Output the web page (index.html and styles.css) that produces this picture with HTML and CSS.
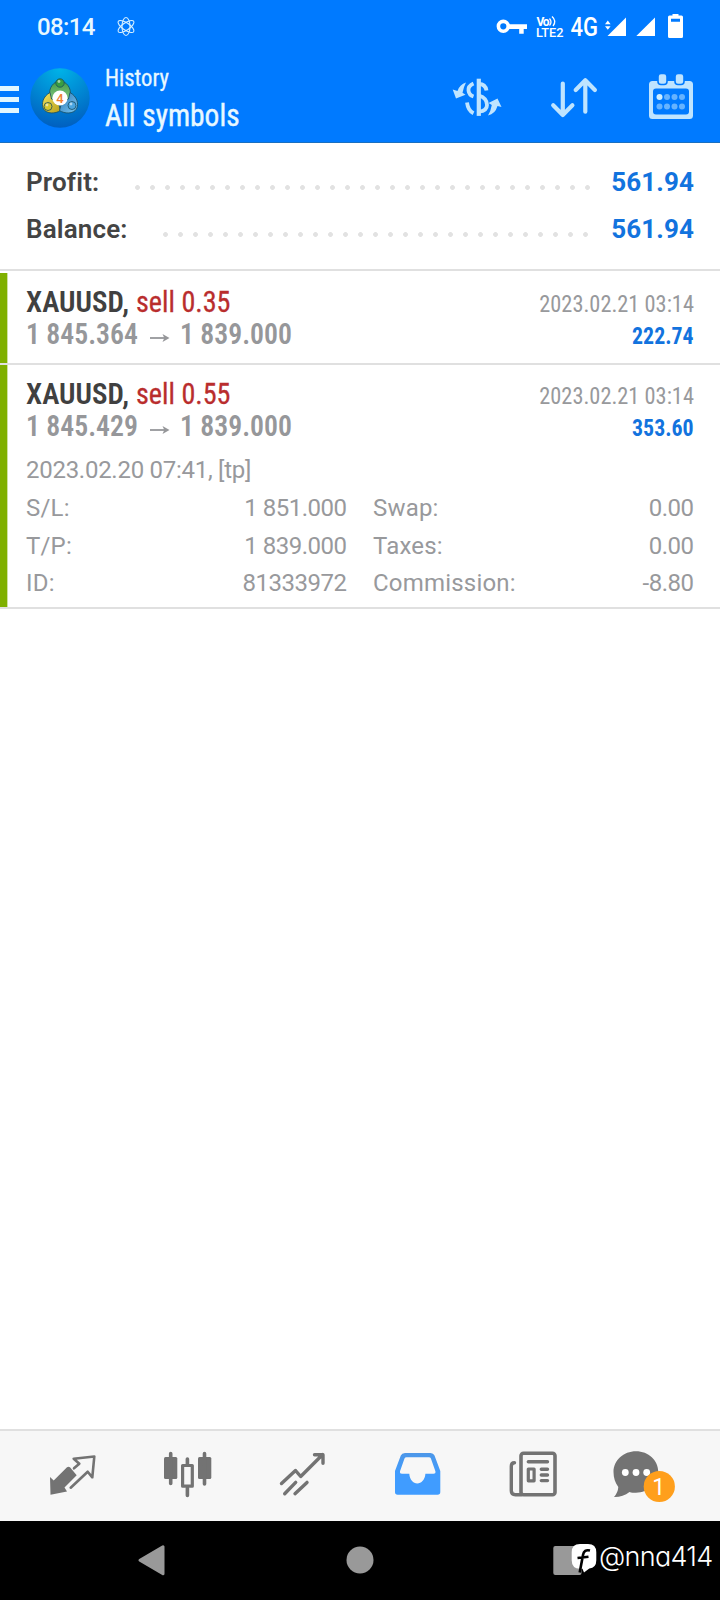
FILE: index.html
```html
<!DOCTYPE html>
<html lang="en">
<head>
<meta charset="utf-8">
<meta name="viewport" content="width=720">
<title>History</title>
<link rel="stylesheet" href="styles.css">
</head>
<body>
<div class="screen">
  <header class="header">
    <div class="status">
      <span class="clock">08:14</span>
      <svg class="atom" viewBox="117 16 18 21" fill="none" stroke="#d8f1ff" stroke-width="1.1">
        <ellipse cx="126" cy="26.500" rx="4" ry="9"/>
        <ellipse cx="126" cy="26.500" rx="3.600" ry="9.300" transform="rotate(56 126 26.500)"/>
        <ellipse cx="126" cy="26.500" rx="3.600" ry="9.300" transform="rotate(-56 126 26.500)"/>
      </svg>
      <svg class="status-icons" viewBox="495 10 190 32" fill="#fff">
        <circle cx="503.300" cy="26.300" r="4.900" fill="none" stroke="#fff" stroke-width="3.600"/>
        <path d="M508 24.300h19v4.600h-3.300v4.800h-4.500v-4.800H508z"/>
        <text class="volte" x="536.500" y="26" textLength="13">Vo</text>
        <path d="M549.500 18.500q3 3.500 0 7M552 16.500q5 4.500 1 9.500" fill="none" stroke="#fff" stroke-width="1.300"/>
        <text class="volte lte" x="536" y="37.300" textLength="27.500" lengthAdjust="spacingAndGlyphs">LTE2</text>
        <text class="net" x="570.500" y="36" textLength="27.500" lengthAdjust="spacingAndGlyphs">4G</text>
        <path d="M605 24.300l2.800-3.800 2.800 3.800zM605 26.200h5.600l-2.800 3.600zM626 17.500V36h-18.500zM655 17.500V36h-18.700z"/>
        <path fill-rule="evenodd" d="M669.500 15.500h3V14h6v1.500h3q1.500 0 1.500 1.500v19.500q0 1.500-1.500 1.500h-12q-1.500 0-1.500-1.500V17q0-1.500 1.500-1.500zM671 18.800v3h9v-3z"/>
      </svg>
    </div>
    <div class="appbar">
      <div class="menu"><i></i><i></i><i></i></div>
      <svg class="logo" viewBox="0 0 60 60">
        <defs>
          <radialGradient id="sky" cx=".5" cy="0" r="1"><stop offset="0" stop-color="#00b4e8"/><stop offset="1" stop-color="#005fc0"/></radialGradient>
          <linearGradient id="grn" x2="0" y2="1"><stop stop-color="#3f9a44"/><stop offset="1" stop-color="#8fce8c"/></linearGradient>
          <linearGradient id="yel" x2="1" y2="1"><stop stop-color="#f3e45e"/><stop offset="1" stop-color="#b79f1c"/></linearGradient>
          <linearGradient id="blu" x2="1" y2="1"><stop stop-color="#2c78b8"/><stop offset="1" stop-color="#7cc8f2"/></linearGradient>
        </defs>
        <circle cx="30" cy="30" r="29.700" fill="url(#sky)"/>
        <g stroke="#194c5f" stroke-width=".8">
          <path d="M20 28c-2-8 4-15 10-15s12 7 10 15c-1 5-7 6-10 6s-9-1-10-6z" fill="url(#grn)"/>
          <path d="M20 24.500c-7 4-9 11-6.500 16.500 3 5 12 5 17 1.500l-2-7.500-7-4z" fill="url(#yel)"/>
          <path d="M40 24.500c7 4 9 11 6.500 16.500-3 5-12 5-17 1.500l2-7.500 7-4z" fill="url(#blu)"/>
          <circle cx="30" cy="15" r="4.200" fill="#399e42"/>
          <circle cx="18" cy="38.500" r="4" fill="#d8c72c"/>
          <circle cx="42" cy="37.500" r="4" fill="#4aa5e0"/>
        </g>
        <g fill="#fff" opacity=".55"><circle cx="29" cy="13.500" r="1.400"/><circle cx="17" cy="37" r="1.400"/><circle cx="41" cy="36" r="1.400"/></g>
        <circle cx="30" cy="30" r="7.600" fill="#fff"/>
        <text x="30" y="34.500" text-anchor="middle" class="logo-num">4</text>
      </svg>
      <div class="titles">
        <div class="t1 cond">History</div>
        <div class="t2 cond">All symbols</div>
      </div>
      <svg class="act swap" viewBox="452 77 50 40" fill="#bfe4ff">
        <path d="M452.700 89.500l3.300 9 9.500-3.800-3-2q1-5.500 3.500-10.200-6.500 2-8.500 8.500zM501.500 107l-4-8.500-9 4.500 3.300 2q-1 6-3.800 10.500 7.200-1.500 9.500-9.500z"/>
        <g fill="none" stroke="#bfe4ff" stroke-width="3.800">
          <path d="M478.800 78.700v37.200" stroke-width="4.200"/>
          <path d="M473.500 83.500q-5.500 2.500-5 7t5 6M467 102.500q1 8 6.500 10.800M479 84q6.300 0 7.500 6.500M479 95.500q8 2.500 8 9.500 0 6-8 6.500"/>
        </g>
      </svg>
      <svg class="act sort" viewBox="549 76 50 43" fill="none" stroke="#bfe4ff" stroke-width="4.200" stroke-linecap="round" stroke-linejoin="round">
        <path d="M562.800 83.500v31.200M553.200 105.300l9.600 9.700 9.600-9.700M585.300 111.700V81M575.700 90l9.600-9.700 9.600 9.700"/>
      </svg>
      <svg class="act cal" viewBox="649 74 44 46">
        <path fill="#bfe4ff" fill-rule="evenodd" d="M652.500 81h37q3.500 0 3.500 3.500v31q0 3.500-3.500 3.500h-37q-3.500 0-3.500-3.500v-31q0-3.500 3.500-3.500zm3.500 7.500q-3 0-3 3v20q0 3 3 3h30q3 0 3-3v-20q0-3-3-3z"/>
        <g fill="#bfe4ff" stroke="#007aff" stroke-width="1.600"><rect x="658" y="73.500" width="9" height="11" rx="3"/><rect x="675" y="73.500" width="9" height="11" rx="3"/></g>
        <g fill="#66b3ff"><circle cx="659.500" cy="97" r="3" fill="#cfeeff"/><circle cx="667" cy="97" r="3"/><circle cx="674.500" cy="97" r="3"/><circle cx="682" cy="97" r="3"/><circle cx="659.500" cy="106.500" r="3"/><circle cx="667" cy="106.500" r="3"/><circle cx="674.500" cy="106.500" r="3"/><circle cx="682" cy="106.500" r="3"/></g>
      </svg>
    </div>
  </header>

  <section class="summary">
    <div class="sum-row"><span class="name">Profit:</span><span class="dots d1"></span><span class="amount">561.94</span></div>
    <div class="sum-row"><span class="name">Balance:</span><span class="dots d2"></span><span class="amount">561.94</span></div>
  </section>

  <main class="deals">
    <article class="deal first">
      <div class="line top"><span class="sym cond">XAUUSD,</span><span class="side cond">sell 0.35</span><span class="date cond">2023.02.21 03:14</span></div>
      <div class="line price"><span class="p cond">1 845.364</span><svg class="arrow" viewBox="0 0 20 10"><path d="M0 5h16"/><path class="head" d="M12.500 1l7 4-7 4 1.800-4z"/></svg><span class="p cond">1 839.000</span><span class="gain cond">222.74</span></div>
    </article>
    <article class="deal">
      <div class="line top"><span class="sym cond">XAUUSD,</span><span class="side cond">sell 0.55</span><span class="date cond">2023.02.21 03:14</span></div>
      <div class="line price"><span class="p cond">1 845.429</span><svg class="arrow" viewBox="0 0 20 10"><path d="M0 5h16"/><path class="head" d="M12.500 1l7 4-7 4 1.800-4z"/></svg><span class="p cond">1 839.000</span><span class="gain cond">353.60</span></div>
      <div class="opened">2023.02.20 07:41, [tp]</div>
      <div class="details">
        <div class="kv"><span>S/L:</span><span class="v">1 851.000</span></div><div class="kv"><span>Swap:</span><span class="v">0.00</span></div>
        <div class="kv"><span>T/P:</span><span class="v">1 839.000</span></div><div class="kv"><span>Taxes:</span><span class="v">0.00</span></div>
        <div class="kv"><span>ID:</span><span class="v">81333972</span></div><div class="kv"><span>Commission:</span><span class="v">-8.80</span></div>
      </div>
    </article>
  </main>

  <nav class="tabs">
    <svg viewBox="41 1444 64 64"><path fill="#737373" d="M50 1477l3.700 3.500L67 1467.300q1.500-1 3 0l6.700 8-12.200 12.200 2.500 4-16.500 3.300z"/><path class="ln" stroke-width="2.600" d="M74 1468.300l5.300-4.600-5.600-5 20.600-2.200-2 20.800-4.600-5.600-17 16"/></svg>
    <svg viewBox="156 1444 64 64"><g fill="#737373"><rect x="164" y="1457" width="13.300" height="22" rx="1.500"/><rect x="198" y="1457" width="13.300" height="22" rx="1.500"/></g><path class="ln" stroke-width="3.600" d="M170.700 1453.500v30M204.500 1453.500v30.500M187.400 1459v5M187.400 1488v7.500"/><rect class="ln" stroke-width="3.200" x="182.600" y="1465.500" width="9.700" height="20.700"/></svg>
    <svg viewBox="271 1444 64 64"><path class="ln" stroke-width="3.400" d="M281.500 1483.500l14-13 5.200 6 22-22M314.500 1454.700h8.500v8.500M284.700 1493.700l11-11.300M295 1493.700l12-11.300"/></svg>
    <svg viewBox="386 1444 64 64"><defs><linearGradient id="tray" x2="0" y2="1"><stop stop-color="#4d97e8"/><stop offset=".5" stop-color="#409cff"/></linearGradient></defs><path fill="url(#tray)" fill-rule="evenodd" d="M405 1453h25.500q3 0 4 2.500l5.800 15.500v21q0 2.700-2.700 2.700h-40q-2.600 0-2.600-2.700v-21l5.800-15.500q1-2.500 4.200-2.500zm1.500 4.300q-1.500 0-2 1.300l-4.500 12.700q-.5 2.500 2 2.500h7.300c.4 6 4 9.700 8 9.700s7.700-3.700 8.100-9.700h8q2.500 0 2-2.500l-4.500-12.700q-.5-1.300-2-1.300z"/></svg>
    <svg viewBox="501 1444 64 64"><rect class="ln" stroke-width="3.600" x="521" y="1453.200" width="34" height="41.600" rx="2.500"/><path class="ln" stroke-width="3.400" d="M514.500 1462.700q-3.200 0-3.200 3.500v24.500q0 4 4.200 4h6M528.300 1461.800h19.200M541.300 1469.300h6.200M541.300 1475h6.200M541.300 1480.600h6.200"/><rect class="ln" stroke-width="3.200" x="528.300" y="1469" width="5.800" height="11.800"/></svg>
    <svg viewBox="616 1444 64 64"><path fill="#737373" d="M636 1451.300c12.500 0 22.300 9 22.300 20.700s-9.800 20.700-22.300 20.700c-2.500 0-4.500-.2-6.500-.8-4.500 3.600-9.500 5.100-15.500 5q4-4.500 4.300-10c-3-3.900-4.800-8.900-4.800-14.900 0-11.700 10-20.700 22.500-20.700z"/><g fill="#fff"><circle cx="625.300" cy="1472.500" r="3.400"/><circle cx="636" cy="1472.500" r="3.400"/><circle cx="646.700" cy="1472.500" r="3.400"/></g><circle cx="659.300" cy="1486.500" r="15.600" fill="#ff9f1c"/><text class="badge" x="658.800" y="1494.700" text-anchor="middle">1</text></svg>
  </nav>

  <footer class="sysnav">
    <svg class="back" viewBox="138 1544 28 32"><path d="M140 1560.300l23-13.500v27z"/></svg>
    <svg class="home" viewBox="346 1546 28 28"><circle cx="360" cy="1560" r="13.500"/></svg>
    <svg class="recent" viewBox="553 1542 44 34"><rect x="553.300" y="1546" width="28.200" height="29" rx="2"/><path fill="#fff" d="M580 1544h8q8.300 0 8.300 8.300v8q0 7.500-7 8.200l-5.300 4-1.500-3.800h-2.500q-8.300 0-8.300-8.400v-8q0-8.300 8.300-8.300z"/><path d="M590 1550.500q-6-1.500-7 4.500l-3.300 17.500M577.500 1558l11-1.300" fill="none" stroke="#000" stroke-width="2.600"/></svg>
    <span class="handle">@nna414</span>
  </footer>
</div>
</body>
</html>
```
FILE: styles.css
```css
* { box-sizing: border-box; }
body { margin: 0; background: #fff; font-family: Roboto, "Liberation Sans", sans-serif; }
.screen { width: 720px; height: 1600px; display: flex; flex-direction: column; overflow: hidden; white-space: nowrap; }
svg { display: block; flex: none; overflow: visible; }
.cond { font-family: "Roboto Condensed", Roboto, sans-serif; font-stretch: 75%; transform-origin: 0 50%; }

.header { height: 143px; background: #007aff; border-bottom: 1px solid #1a6fc0; color: #e8f8ff; }
.status { height: 54px; display: flex; padding-left: 37px; }
.clock { width: 80px; font-size: 24px; font-weight: 500; line-height: 54px; letter-spacing: -.6px; }
.atom { width: 18px; height: 21px; margin-top: 16px; }
.status-icons { width: 190px; height: 32px; margin: 10px 35px 0 auto; }
.volte { font: 700 12px Roboto, sans-serif; }
.lte { font-weight: 500; }
.net { font: 500 26px Roboto, sans-serif; }

.appbar { height: 88px; display: flex; }
.menu { width: 19px; margin-top: 32px; display: flex; flex-direction: column; gap: 6px; }
.menu i { height: 5px; background: #e2f7ff; }
.logo { width: 60px; height: 60px; margin: 14px 0 0 11px; }
.logo-num { font: 500 13px Roboto, sans-serif; fill: #f08030; }
.titles { margin-left: 15px; width: 332px; }
.t1 { font-size: 24px; line-height: 28px; margin-top: 10px; transform: scaleX(.945); -webkit-text-stroke: .3px; }
.t2 { font-size: 32px; line-height: 38px; margin-top: 4px; transform: scaleX(.92); -webkit-text-stroke: .4px; }
.swap { width: 50px; height: 40px; margin: 23px 47px 0 15px; }
.sort { width: 50px; height: 43px; margin: 22px 50px 0 0; }
.cal { width: 44px; height: 46px; margin: 20px 0 0; }

.summary { height: 128px; padding: 16px 26px 0; border-bottom: 2px solid #e0e0e0; }
.sum-row { position: relative; height: 47px; display: flex; line-height: 47px; font-size: 26px; font-weight: 600; }
.name { color: #444; letter-spacing: .15px; }
.amount { color: #1273de; font-weight: 700; letter-spacing: .1px; margin-left: auto; }
.dots { position: absolute; height: 5px; margin-top: 26px; background: radial-gradient(circle at 7.500px 2.500px, #e2e2e2 2px, transparent 2.800px) 0 0 / 15px 5px repeat-x; }
.d1 { left: 104px; width: 465px; }
.d2 { left: 132px; width: 435px; }

.deals { flex: 1; }
.deal { border-bottom: 2px solid #e0e0e0; padding: 10px 26px 0 26px; height: 244px; background: linear-gradient(90deg, #7fb000 7px, #cfe2a2 7px, #cfe2a2 8px, transparent 8px) padding-box; }
.first { margin-top: 2px; height: 92px; }
.line { display: flex; height: 32px; line-height: 32px; font-size: 30px; }
.top { padding-top: 3px; }
.sym { font-weight: 600; color: #404040; width: 110px; transform: scaleX(.965); }
.side { color: #b92d2d; transform: scaleX(.938); -webkit-text-stroke: .3px; }
.date { margin-left: auto; font-size: 24px; line-height: 36px; color: #98999c; transform-origin: 100% 50%; transform: scaleX(.932); }
.price { padding-top: 3px; }
.p { width: 110px; font-weight: 600; color: #96979a; }
.price .p { transform: scaleX(.925); transform-origin: 0 50%; }
.arrow { width: 20px; height: 10px; margin: 15px 10px 0 14px; fill: none; stroke: #96979a; stroke-width: 1.8; }
.head { fill: #96979a; stroke: none; }
.gain { margin-left: auto; font-size: 24px; font-weight: 700; line-height: 36px; color: #1273de; transform-origin: 100% 50%; transform: scaleX(.91); }
.opened { margin-top: 12px; height: 39px; line-height: 38px; font-size: 24px; color: #98999c; letter-spacing: -.27px; }
.details { display: grid; grid-template-columns: 321px 321px; column-gap: 26px; grid-auto-rows: 37.500px; line-height: 37.500px; font-size: 24px; color: #98999c; letter-spacing: .2px; }
.kv { display: flex; justify-content: space-between; }
.v { letter-spacing: -.5px; margin-right: .5px; }

.tabs { height: 92px; border-top: 2px solid #e0e0e0; background: #f7f7f7; padding: 0 15px; display: grid; grid-template-columns: repeat(6, 115px); place-items: center; }
.tabs svg { width: 64px; height: 64px; }
.ln { fill: none; stroke: #737373; stroke-linecap: round; stroke-linejoin: round; }
.badge { font: 400 23px Roboto, sans-serif; fill: #fff; }

.sysnav { height: 79px; background: #000; display: flex; padding-left: 138px; fill: #999; }
.back { width: 28px; height: 32px; margin-top: 23px; stroke: #999; stroke-width: 3; stroke-linejoin: round; }
.home { width: 28px; height: 28px; margin: 25px 0 0 180px; }
.recent { width: 44px; height: 34px; margin: 21px 0 0 179px; }
.handle { color: #fff; font: 300 27px/40px Inter, Lato, sans-serif; font-feature-settings: "cv11", "cv05"; letter-spacing: -.7px; margin: 16px 0 0 2px; }
```
